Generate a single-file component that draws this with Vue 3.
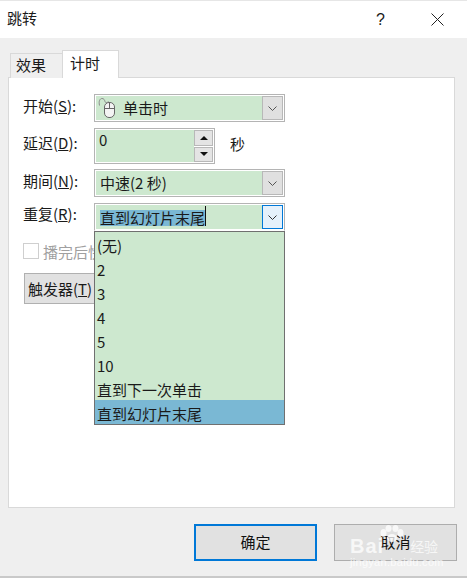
<template>
  <div class="dialog">
    <div class="titlebar">
      <span class="title">跳转</span>
      <span class="help">?</span>
      <svg class="close" width="13" height="13" viewBox="0 0 13 13">
        <path d="M0.5 0.5L12.5 12.5M12.5 0.5L0.5 12.5" stroke="#222" fill="none" />
      </svg>
    </div>
    <div class="body">
      <div class="tabs">
        <div class="tab">效果</div>
        <div class="tab active">计时</div>
      </div>
      <div class="panel">
        <div class="row start">
          <label>开始(<u>S</u>):</label>
          <div class="combo">
            <svg class="mouse" width="19" height="23" viewBox="0 0 19 23">
              <path d="M1.5 8.5C0.5 4 2 1.5 4 1.5S6.5 3 7 4.5S9 6 10.5 4.5" stroke="#8a8a8a" fill="none" />
              <rect x="6.5" y="5.5" width="10" height="15" rx="4.5" fill="#f4f4f4" stroke="#666" />
              <path d="M6.5 11.5H16.5M11.5 5.5V11.5" stroke="#666" fill="none" />
            </svg>
            <span class="value with-icon">单击时</span>
            <span class="arrow">
              <svg width="9" height="5" viewBox="0 0 9 5"><path d="M0.5 0.5L4.5 4.5L8.5 0.5" stroke="#555" fill="none" /></svg>
            </span>
          </div>
        </div>
        <div class="row delay">
          <label>延迟(<u>D</u>):</label>
          <div class="spin">
            <span class="spin-value">0</span>
            <div class="spin-btns">
              <span class="spin-btn"><i class="up"></i></span>
              <span class="spin-btn"><i class="down"></i></span>
            </div>
          </div>
          <span class="unit">秒</span>
        </div>
        <div class="row period">
          <label>期间(<u>N</u>):</label>
          <div class="combo">
            <span class="value">中速(2 秒)</span>
            <span class="arrow">
              <svg width="9" height="5" viewBox="0 0 9 5"><path d="M0.5 0.5L4.5 4.5L8.5 0.5" stroke="#555" fill="none" /></svg>
            </span>
          </div>
        </div>
        <div class="row repeat">
          <label>重复(<u>R</u>):</label>
          <div class="combo open">
            <span class="value"><span class="selected">直到幻灯片末尾</span><i class="caret"></i></span>
            <span class="arrow focus">
              <svg width="9" height="5" viewBox="0 0 9 5"><path d="M0.5 0.5L4.5 4.5L8.5 0.5" stroke="#333" fill="none" /></svg>
            </span>
            <ul class="list">
              <li v-for="item in options" :key="item" :class="{ current: item === current }">{{ item }}</li>
            </ul>
          </div>
        </div>
        <div class="check-row">
          <span class="checkbox"></span>
          <span class="check-label">播完后快退</span>
        </div>
        <button class="trigger">触发器(<u>T</u>)</button>
      </div>
      <div class="footer">
        <button class="btn primary">确定</button>
        <button class="btn">取消</button>
      </div>
    </div>
    <div class="watermark">
      <svg class="paw" width="24" height="17" viewBox="0 0 24 17">
        <ellipse cx="3.5" cy="8" rx="3" ry="4" />
        <ellipse cx="8.5" cy="3.5" rx="3" ry="3.5" />
        <ellipse cx="15.5" cy="3.5" rx="3" ry="3.5" />
        <ellipse cx="20.5" cy="8" rx="3" ry="4" />
        <ellipse cx="12" cy="13" rx="5" ry="4" />
      </svg>
      <div class="wm-main"><b>Bai</b><span>经验</span></div>
      <div class="wm-url">jingyan.baidu.com</div>
    </div>
  </div>
</template>

<script setup>
const options = ["(无)", "2", "3", "4", "5", "10", "直到下一次单击", "直到幻灯片末尾"];
const current = "直到幻灯片末尾";
</script>

<style>
html,
body {
  margin: 0;
  background: #fff;
}
</style>

<style scoped>
* {
  box-sizing: border-box;
}
.dialog {
  position: relative;
  width: 467px;
  height: 578px;
  overflow: hidden;
  display: flex;
  flex-direction: column;
  font-family: "Noto Sans CJK SC", "Liberation Sans", sans-serif;
  font-size: 15px;
  color: #1a1a1a;
  background: #efefef;
  border-top: 1px solid #e6e6e6;
  border-bottom: 2px solid #c9c9c9;
}
.titlebar {
  height: 37px;
  flex: none;
  background: #fff;
  display: flex;
  align-items: center;
  padding: 0 23px 0 7px;
}
.title {
  flex: 1;
  line-height: 33px;
  height: 37px;
}
.help {
  margin-right: 46px;
  font-family: "Liberation Sans", sans-serif;
  font-size: 16px;
}
.close {
  display: block;
}
.body {
  flex: 1;
  display: flex;
  flex-direction: column;
  padding: 12px 12px 0 8px;
}
.tabs {
  display: flex;
  align-items: flex-end;
  height: 28px;
  padding-left: 2px;
  margin-bottom: -1px;
  position: relative;
  z-index: 1;
}
.tab {
  width: 52px;
  height: 25px;
  border: 1px solid #d9d9d9;
  border-bottom: none;
  border-right: none;
  background: #efefef;
  padding-left: 5px;
  line-height: 21px;
}
.tab.active {
  width: 57px;
  height: 28px;
  background: #fff;
  border-right: 1px solid #d9d9d9;
  padding-left: 7px;
  line-height: 24px;
}
.panel {
  height: 431px;
  flex: none;
  background: #fff;
  border: 1px solid #d9d9d9;
  padding: 16px 0 0 14px;
}
.row {
  display: flex;
  align-items: flex-start;
  height: 28px;
}
.row label {
  width: 71px;
  flex: none;
  line-height: 24px;
}
.delay {
  height: 36px;
  margin-top: 6px;
}
.delay label {
  line-height: 30px;
}
.period {
  margin-top: 5px;
}
.repeat {
  margin-top: 6px;
}
.repeat label {
  line-height: 22px;
}
.combo {
  position: relative;
  width: 191px;
  height: 28px;
  border: 1px solid #b4b4b4;
  padding: 1px;
  display: flex;
  background: #fff;
}
.combo.open {
  border-bottom-color: #fff;
}
.value {
  flex: 1;
  background: #cde8cf;
  padding-left: 4px;
  line-height: 24px;
  white-space: nowrap;
}
.with-icon {
  padding-left: 27px;
}
.mouse {
  position: absolute;
  left: 3px;
  top: 2px;
}
.selected {
  display: inline-block;
  height: 16px;
  margin-top: 5px;
  line-height: 16px;
  background: #7ab8d4;
  vertical-align: top;
}
.caret {
  display: inline-block;
  width: 1px;
  height: 20px;
  margin-top: 1px;
  background: #111;
  vertical-align: top;
}
.arrow {
  width: 21px;
  flex: none;
  background: #e0e0e0;
  border: 1px solid #b8b8b8;
  display: flex;
  align-items: center;
  justify-content: center;
}
.arrow.focus {
  background: #e5f1fb;
  border-color: #0078d7;
}
.list {
  position: absolute;
  z-index: 2;
  left: -1px;
  top: 27px;
  width: 191px;
  height: 194px;
  margin: 0;
  padding: 0;
  list-style: none;
  background: #cde8cf;
  border: 1px solid #707070;
}
.list li {
  height: 24px;
  padding: 2px 0 0 2px;
  line-height: 24px;
  white-space: nowrap;
}
.list li.current {
  background: #7ab8d4;
}
.spin {
  width: 121px;
  height: 36px;
  border: 1px solid #b4b4b4;
  padding: 1px;
  display: flex;
  background: #fff;
}
.spin-value {
  flex: 1;
  background: #cde8cf;
  padding-left: 3px;
  line-height: 20px;
}
.spin-btns {
  width: 19px;
  flex: none;
  display: flex;
  flex-direction: column;
  gap: 1px;
}
.spin-btn {
  flex: 1;
  background: #e4e4e4;
  border: 1px solid #b8b8b8;
  display: flex;
  align-items: center;
  justify-content: center;
}
.up,
.down {
  width: 0;
  height: 0;
  border-left: 4px solid transparent;
  border-right: 4px solid transparent;
}
.up {
  border-bottom: 4px solid #111;
}
.down {
  border-top: 4px solid #111;
}
.unit {
  margin-left: 15px;
  line-height: 32px;
}
.check-row {
  display: flex;
  align-items: center;
  height: 16px;
  margin-top: 12px;
}
.checkbox {
  width: 16px;
  height: 16px;
  border: 1px solid #cfcfcf;
  background: #fff;
}
.check-label {
  margin-left: 4px;
  color: #a0a0a0;
  white-space: nowrap;
}
.trigger {
  display: block;
  width: 90px;
  height: 31px;
  margin: 14px 0 0 1px;
  padding: 0 0 0 3px;
  border: 1px solid #b0b0b0;
  background: #e1e1e1;
  font: inherit;
  color: inherit;
  text-align: left;
}
.footer {
  display: flex;
  justify-content: flex-end;
  gap: 17px;
  margin: 16px -2px 0 0;
}
.btn {
  width: 123px;
  height: 37px;
  border: 1px solid #adadad;
  background: #e1e1e1;
  font: inherit;
  color: #111;
  padding: 0 0 2px;
}
.btn.primary {
  border: 2px solid #0078d7;
}
.watermark {
  position: absolute;
  left: 350px;
  top: 524px;
  width: 100px;
  color: rgba(255, 255, 255, 0.75);
  pointer-events: none;
}
.paw {
  display: block;
  margin-left: 30px;
  fill: rgba(255, 255, 255, 0.75);
}
.wm-main {
  display: flex;
  align-items: center;
  height: 18px;
  margin-top: -5px;
}
.wm-main b {
  font-family: "Liberation Sans", sans-serif;
  font-size: 20px;
  line-height: 18px;
  letter-spacing: 1px;
}
.wm-main span {
  margin-left: 26px;
  font-size: 14px;
  line-height: 18px;
}
.wm-url {
  font-family: "Liberation Sans", sans-serif;
  font-size: 11px;
  line-height: 12px;
  margin-top: 1px;
  white-space: nowrap;
  letter-spacing: 0.3px;
}
</style>
